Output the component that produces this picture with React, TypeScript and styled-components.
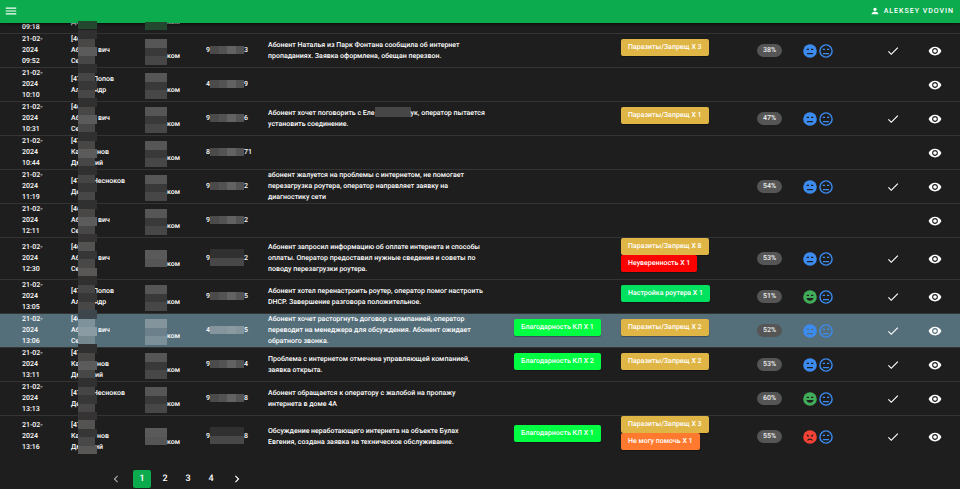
import React from "react";
import styled, { createGlobalStyle, css } from "styled-components";
import { MdCheck, MdChevronLeft, MdChevronRight, MdMenu, MdPerson, MdVisibility } from "react-icons/md";

const GlobalStyle = createGlobalStyle`
  * { box-sizing: border-box; }
  body {
    margin: 0;
    background: #1e1e1e;
    color: #fff;
    font-family: Roboto, "Liberation Sans", sans-serif;
    font-size: 7px;
    font-weight: 500;
    line-height: 11px;
    text-rendering: geometricPrecision;
  }
  button { font: inherit; color: inherit; border: 0; padding: 0; background: none; cursor: pointer; text-rendering: inherit; }
`;

const AppBar = styled.header`
  position: sticky;
  top: 0;
  z-index: 2;
  display: flex;
  align-items: center;
  justify-content: space-between;
  height: 23px;
  padding: 0 6px 1px 4px;
  background: #0cab4e;
  box-shadow: 0 1px 3px rgba(0, 0, 0, 0.6);
`;

const BarButton = styled.button`
  display: flex;
  align-items: center;
  gap: 4px;
  letter-spacing: 1px;
  text-transform: uppercase;
`;

const Content = styled.main`
  margin-top: -23px;
`;

const CallTable = styled.table`
  width: 100%;
  table-layout: fixed;
  border-collapse: separate;
  border-spacing: 0;
`;

const Column = styled.col<{ $width?: number }>`
  width: ${(p) => (p.$width ? `${p.$width}px` : "auto")};
`;

const Row = styled.tr<{ $active: boolean }>`
  background: ${(p) => (p.$active ? "#546e7a" : "transparent")};
  &:last-child > td { border-bottom: 0; }
`;

const Cell = styled.td`
  position: relative;
  height: 34px;
  padding: 0;
  border-bottom: 1px solid #343434;
  vertical-align: middle;
`;

const DateCell = styled(Cell)`
  padding: 0 24px 0 22px;
`;

const SummaryCell = styled(Cell)`
  padding-right: 28px;
`;

const TagCell = styled(Cell)`
  padding-bottom: 7px;
`;

const CenterCell = styled(Cell)`
  text-align: center;
  svg { vertical-align: middle; }
`;

const Line = styled.div`
  height: 11px;
  white-space: nowrap;
`;

const Head = styled.span<{ $width: number }>`
  display: inline-block;
  width: ${(p) => p.$width}px;
`;

const maskArea = {
  name: css`left: 7px; top: -4px; width: 19px; height: 34px;`,
  nameEdge: css`left: 7px; top: 21px; width: 19px; height: 8px; z-index: 3;`,
  deptEdge: css`left: 0; top: 22px; width: 22px; height: 8px; z-index: 3;`,
  dept: css`left: 0; top: 5px; width: 22px; height: 26px;`,
  deptShort: css`left: 0; top: 12px; width: 22px; height: 17px;`,
  phone: css`left: 4px; top: 12px; width: 34px; height: 8px; flex-direction: row;`,
  phoneTall: css`left: 4px; top: 11px; width: 34px; height: 17px;`,
  nameTall: css`left: 7px; top: -4px; width: 19px; height: 42px;`,
};
type Area = keyof typeof maskArea;

const Mask = styled.span<{ $area: Area }>`
  position: absolute;
  z-index: 1;
  display: flex;
  flex-direction: column;
  ${(p) => maskArea[p.$area]}
`;

const Block = styled.i<{ $shade: string; $narrow?: boolean }>`
  flex: 1;
  background: ${(p) => p.$shade};
  margin-right: ${(p) => (p.$narrow ? 2 : 0)}px;
`;

const WordMask = styled.span`
  display: inline-block;
  width: 36px;
  height: 10px;
  margin: -2px 0 -1px;
  vertical-align: middle;
  background: #474747;
`;

const Tag = styled.button<{ $color: string }>`
  display: block;
  height: 17px;
  padding: 0 7px;
  border-radius: 2px;
  background: ${(p) => p.$color};
  white-space: nowrap;
  box-shadow: 0 1px 1px rgba(0, 0, 0, 0.3);
`;

const Percent = styled.span`
  display: block;
  width: 25px;
  padding: 1px 0;
  border-radius: 7px;
  background: #555;
  color: #eee;
  text-align: center;
`;

const Moods = styled.div`
  display: flex;
`;

const Pager = styled.nav`
  display: flex;
  gap: 5px;
  margin: 13px 0 1px 104px;
`;

const PageButton = styled.button<{ $active?: boolean; $arrow?: boolean }>`
  display: flex;
  align-items: center;
  justify-content: center;
  width: ${(p) => (p.$arrow ? 24 : 18)}px;
  height: 18px;
  border-radius: 2px;
  background: ${(p) => (p.$active ? "#0cab4e" : "transparent")};
  font-size: 9px;
  &:disabled { color: #aaa; }
`;

type Mood = "neutral" | "happy" | "angry";
const moodColor: Record<Mood, string> = { neutral: "#3b8bf0", happy: "#42ad58", angry: "#f44336" };

const MOUTHS: Record<Mood, string> = {
  neutral: "M5 10h6v1.3H5z",
  happy: "M4.5 9h7a3.6 3.6 0 0 1-7 0z",
  angry: "M5 11.5C6 8.8 10 8.8 11 11.5H9.6C9 10.6 7 10.6 6.4 11.5z",
};

const EYES: Record<Mood, string> = {
  neutral: "M4.7 5.7H7V7H4.7zM9 5.7h2.3V7H9z",
  happy: "M4.7 5.7H7V7H4.7zM9 5.7h2.3V7H9z",
  angry: "M4.5 5.2L7 6.4V7.4H5.2zM11.5 5.2L9 6.4V7.4H10.8z",
};

function Face({ mood, outline, ink = "#1e1e1e" }: { mood: Mood; outline?: boolean; ink?: string }) {
  const color = moodColor[mood];
  return (
    <svg width="16" height="16" viewBox="0 0 16 16" aria-label={mood}>
      {outline ? (
        <circle cx="8" cy="8" r="6.1" fill="none" stroke={color} strokeWidth="1.4" />
      ) : (
        <circle cx="8" cy="8" r="6.8" fill={color} />
      )}
      <path d={EYES[mood] + MOUTHS[mood]} fill={outline ? color : ink} />
    </svg>
  );
}

type NameLine = [head: string, width: number, tail: string];
const ABRAMOVICH: NameLine[] = [["[46", 0, ""], ["Аб", 27, "вич"], ["Се", 0, ""]];
const POPOV: NameLine[] = [["[47", 22, "Попов"], ["Ал", 23, "ндр"]];
const KAZANOV: NameLine[] = [["[47", 0, ""], ["Ка", 26, "нов"], ["Дм", 24, "ий"]];
const CHESNOKOV: NameLine[] = [["[47", 22, "Чесноков"], ["Де", 0, ""]];

const YELLOW = "#dfb545";
const LIME = "#00ff43";
const pests = (n: number) => ({ text: `Паразиты/Запрещ X ${n}`, color: YELLOW });
const thanks = (n: number) => ({ text: `Благодарность КЛ X ${n}`, color: LIME });

interface Call {
  time: string;
  name: NameLine[];
  phone?: [string, string];
  summary?: React.ReactNode;
  good?: { text: string; color: string };
  bad?: { text: string; color: string }[];
  percent?: number;
  mood?: Mood;
  active?: boolean;
  tall?: boolean;
  edge?: boolean;
}

const CALLS: Call[] = [
  { time: "09:18", name: [["", 0, ""], ["Де", 0, ""]], edge: true },
  { time: "09:52", name: ABRAMOVICH, phone: ["9", "3"], summary: "Абонент Наталья из Парк Фонтана сообщила об интернет пропаданиях. Заявка оформлена, обещан перезвон.", bad: [pests(3)], percent: 38, mood: "neutral" },
  { time: "10:10", name: POPOV, phone: ["4", "9"] },
  { time: "10:31", name: ABRAMOVICH, phone: ["9", "6"], summary: <>Абонент хочет поговорить с Еле<WordMask />ук, оператор пытается<br />установить соединение.</>, bad: [pests(1)], percent: 47, mood: "neutral" },
  { time: "10:44", name: KAZANOV, phone: ["8", "71"] },
  { time: "11:19", name: CHESNOKOV, phone: ["9", "2"], summary: "абонент жалуется на проблемы с интернетом, не помогает перезагрузка роутера, оператор направляет заявку на диагностику сети", percent: 54, mood: "neutral" },
  { time: "12:11", name: ABRAMOVICH, phone: ["9", "2"] },
  { time: "12:30", name: ABRAMOVICH, phone: ["9", "2"], summary: "Абонент запросил информацию об оплате интернета и способы оплаты. Оператор предоставил нужные сведения и советы по поводу перезагрузки роутера.", bad: [pests(8), { text: "Неуверенность X 1", color: "#ff0000" }], percent: 53, mood: "neutral", tall: true },
  { time: "13:05", name: POPOV, phone: ["9", "5"], summary: "Абонент хотел перенастроить роутер, оператор помог настроить DHCP. Завершение разговора положительное.", bad: [{ text: "Настройка роутера X 1", color: "#00e160" }], percent: 51, mood: "happy" },
  { time: "13:06", name: ABRAMOVICH, phone: ["4", "5"], summary: "Абонент хочет расторгнуть договор с компанией, оператор переводит на менеджера для обсуждения. Абонент ожидает обратного звонка.", good: thanks(1), bad: [pests(2)], percent: 52, mood: "neutral", active: true },
  { time: "13:11", name: KAZANOV, phone: ["9", "4"], summary: "Проблема с интернетом отмечена управляющей компанией, заявка открыта.", good: thanks(2), bad: [pests(2)], percent: 53, mood: "neutral" },
  { time: "13:13", name: CHESNOKOV, phone: ["9", "8"], summary: "Абонент обращается к оператору с жалобой на пропажу интернета в доме 4А", percent: 60, mood: "happy" },
  { time: "13:16", name: KAZANOV, phone: ["9", "8"], summary: "Обсуждение неработающего интернета на объекте Булах Евгения, создана заявка на техническое обслуживание.", good: thanks(1), bad: [pests(3), { text: "Не могу помочь X 1", color: "#ff7a2e" }], percent: 55, mood: "angry", tall: true },
];

const SHADES = {
  name: ["#303030", "#484746", "#5b5b5b", "#474747"],
  nameTwo: ["#303030", "#454545", "#373737", "#484747"],
  nameTall: ["#353333", "#535351", "#363636", "#484848", "#585756"],
  nameActive: ["#3c464c", "#7d929b", "#8b9ba4", "#75878f"],
  dept: ["#565656", "#393939", "#474747"],
  deptActive: ["#83949c", "#6b808a", "#7b9098"],
  deptTall: ["#5b5a5a", "#555"],
  phone: ["#4b4b4b", "#535353", "#626262", "#535353"],
  phoneActive: ["#84959d", "#84959d", "#8b9aa1", "#84959d"],
  phoneTall: ["#303030", "#484848"],
};

function Mosaic({ area, shades }: { area: Area; shades: string[] }) {
  const stepped = area === "name" || area === "nameTall";
  return (
    <Mask $area={area} aria-hidden>
      {shades.map((shade, i) => (
        <Block key={i} $shade={shade} $narrow={stepped && (i === 1 || i === 3)} />
      ))}
    </Mask>
  );
}

function CallRow({ call }: { call: Call }) {
  const { active = false, tall, edge } = call;
  const nameShades = tall ? SHADES.nameTall : active ? SHADES.nameActive : call.name.length === 2 ? SHADES.nameTwo : SHADES.name;
  return (
    <Row $active={active}>
      <DateCell>21-02-2024 {call.time}</DateCell>
      <Cell>
        {call.name.map(([head, width, tail], i) => (
          <Line key={i}>
            {width ? <Head $width={width}>{head}</Head> : head}
            {tail}
          </Line>
        ))}
        {edge ? <Mosaic area="nameEdge" shades={["#24482f"]} /> : <Mosaic area={tall ? "nameTall" : "name"} shades={nameShades} />}
      </Cell>
      <Cell>
        <Line />
        <Line><Head $width={22} />ком</Line>
        {edge ? (
          <Mosaic area="deptEdge" shades={["#24482f"]} />
        ) : (
          <Mosaic area={tall ? "deptShort" : "dept"} shades={tall ? SHADES.deptTall : active ? SHADES.deptActive : SHADES.dept} />
        )}
      </Cell>
      <Cell>
        {call.phone && (
          <>
            <Line><Head $width={38}>{call.phone[0]}</Head>{call.phone[1]}</Line>
            <Mosaic area={tall ? "phoneTall" : "phone"} shades={tall ? SHADES.phoneTall : active ? SHADES.phoneActive : SHADES.phone} />
          </>
        )}
      </Cell>
      <SummaryCell>{call.summary}</SummaryCell>
      <TagCell>{call.good && <Tag $color={call.good.color}>{call.good.text}</Tag>}</TagCell>
      <TagCell>
        {call.bad?.map((tag) => <Tag key={tag.text} $color={tag.color}>{tag.text}</Tag>)}
      </TagCell>
      <Cell>{call.percent && <Percent>{call.percent}%</Percent>}</Cell>
      <Cell>
        {call.mood && (
          <Moods>
            <Face mood={call.mood} ink={active ? "#546e7a" : undefined} />
            <Face mood="neutral" outline />
          </Moods>
        )}
      </Cell>
      <CenterCell>{call.mood && <MdCheck size={14} aria-label="Обработан" />}</CenterCell>
      <CenterCell>
        {!edge && <button aria-label="Открыть"><MdVisibility size={14} /></button>}
      </CenterCell>
    </Row>
  );
}

const COLUMNS = [71, 74, 61, 62, undefined, 107, 136, 45, 74, 34, 50];

export default function App() {
  return (
    <>
      <GlobalStyle />
      <AppBar>
        <BarButton aria-label="Меню"><MdMenu size={14} /></BarButton>
        <BarButton><MdPerson size={10} />Aleksey Vdovin</BarButton>
      </AppBar>
      <Content>
        <CallTable>
          <colgroup>
            {COLUMNS.map((width, i) => <Column key={i} $width={width} />)}
          </colgroup>
          <tbody>
            {CALLS.map((call) => <CallRow key={call.time} call={call} />)}
          </tbody>
        </CallTable>
        <Pager aria-label="Страницы">
          <PageButton $arrow disabled aria-label="Назад"><MdChevronLeft size={14} /></PageButton>
          {[1, 2, 3, 4].map((page) => (
            <PageButton key={page} $active={page === 1} aria-current={page === 1 ? "page" : undefined}>{page}</PageButton>
          ))}
          <PageButton $arrow aria-label="Вперёд"><MdChevronRight size={14} /></PageButton>
        </Pager>
      </Content>
    </>
  );
}
